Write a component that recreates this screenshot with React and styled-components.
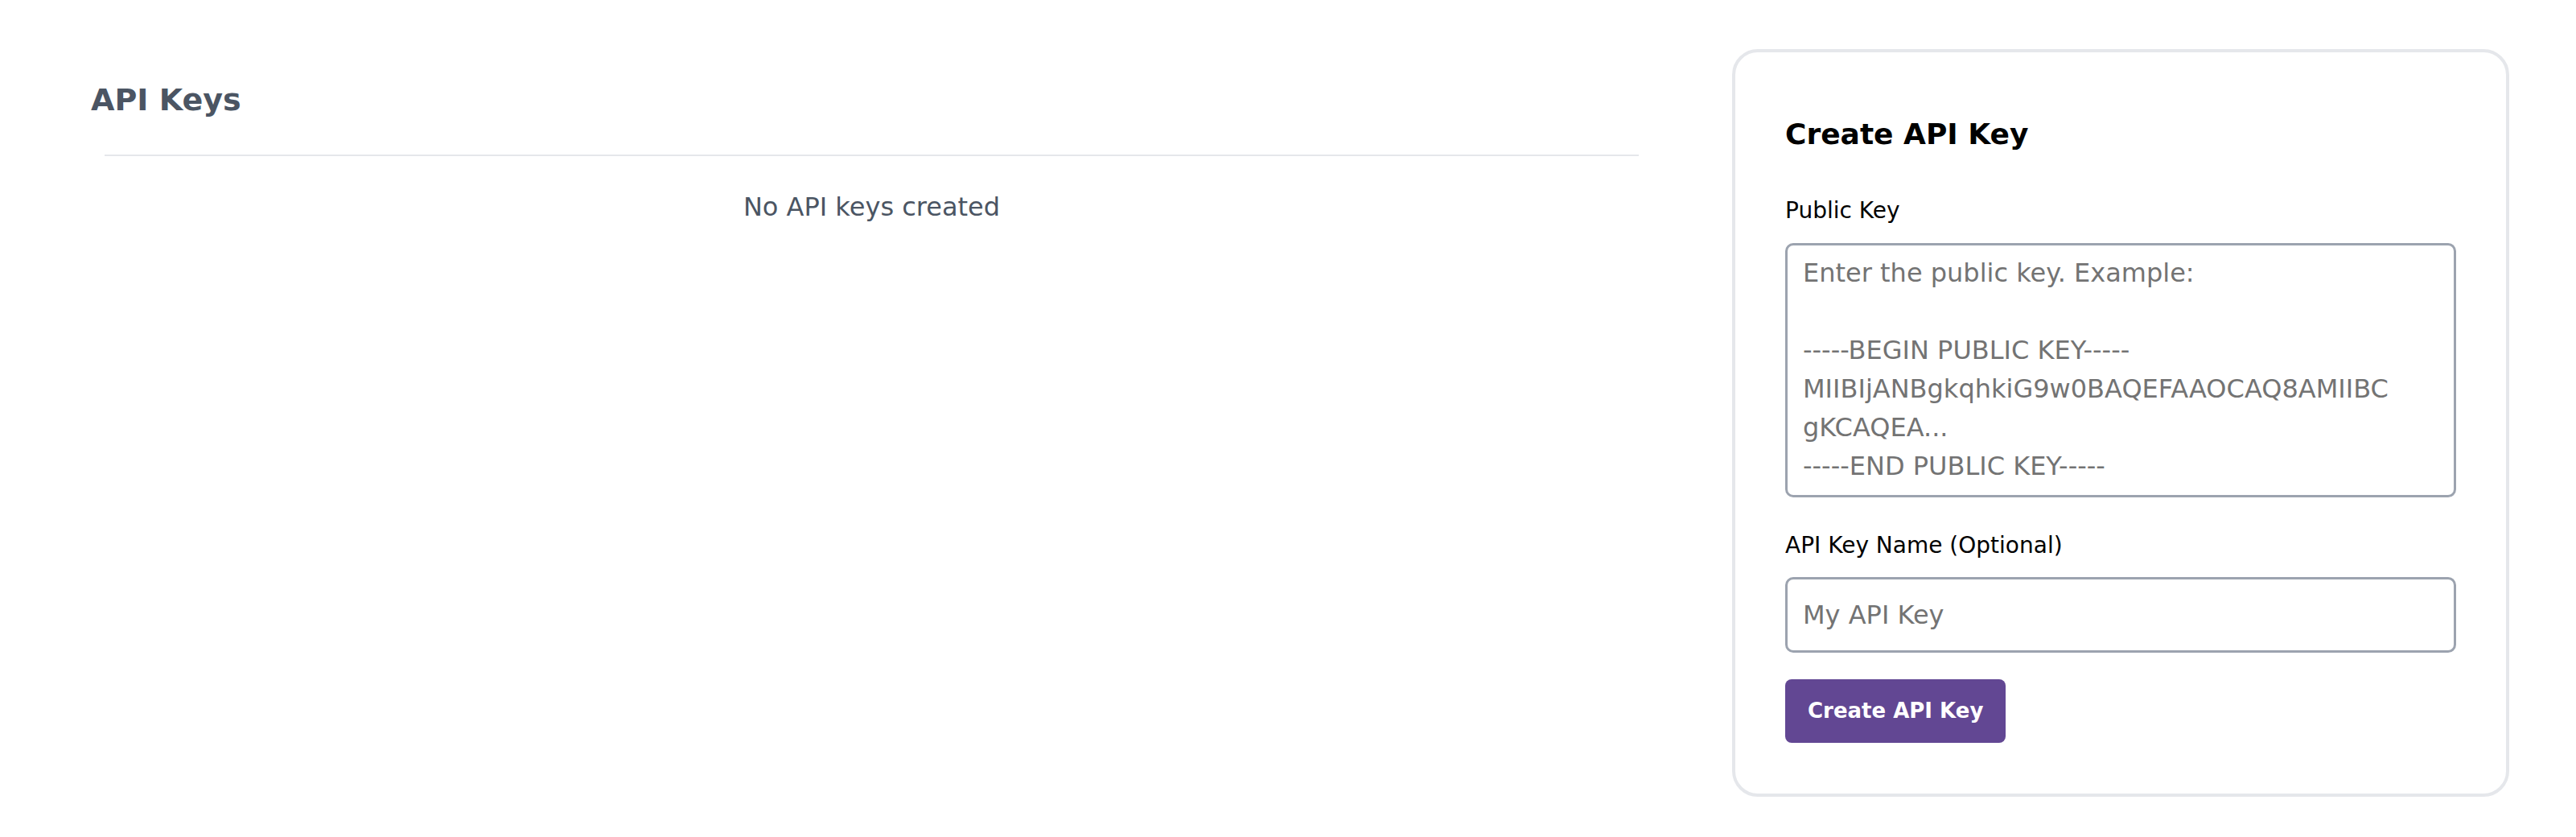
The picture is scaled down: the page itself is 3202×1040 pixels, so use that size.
import React from 'react';
import styled, { createGlobalStyle } from 'styled-components';

const GlobalStyle = createGlobalStyle`
    html, body {
        margin: 0;
        padding: 0;
        background: #ffffff;
    }
    body {
        font-family: "DejaVu Sans", "Liberation Sans", sans-serif;
        -webkit-font-smoothing: antialiased;
    }
    * {
        box-sizing: border-box;
    }
`;

const Page = styled.div`
    display: flex;
    align-items: flex-start;
    gap: 99px;
    padding: 61px 83px 0 113px;
    min-height: 1040px;
`;

const KeysColumn = styled.section`
    flex: 1;
    min-width: 0;
    padding-top: 35px;
`;

const PageTitle = styled.h2`
    margin: 0;
    font-size: 38px;
    line-height: 56px;
    font-weight: 700;
    color: #4b5563;
`;

const KeysList = styled.div`
    margin-top: 40px;
    padding: 0 17px;
`;

const Divider = styled.hr`
    margin: 0;
    border: none;
    height: 2px;
    background: #e5e7eb;
`;

const EmptyText = styled.p`
    margin: 39px 0 0;
    text-align: center;
    font-size: 32px;
    line-height: 48px;
    color: #4b5563;
`;

const Card = styled.form`
    flex-shrink: 0;
    width: 966px;
    padding: 78px 62px 63px;
    border: 4px solid #e5e7eb;
    border-radius: 32px;
    background: #ffffff;
`;

const CardTitle = styled.h3`
    margin: 0;
    font-size: 36px;
    line-height: 48px;
    font-weight: 700;
    color: #000000;
`;

const Field = styled.div`
    display: flex;
    flex-direction: column;
    margin-top: ${(p) => p.$gap}px;
`;

const Label = styled.label`
    font-size: 28px;
    line-height: 40px;
    color: #000000;
    margin-bottom: ${(p) => p.$gap || 20}px;
`;

const inputBase = `
    width: 100%;
    border: 3px solid #9ca3af;
    border-radius: 10px;
    font-family: "DejaVu Sans", "Liberation Sans", sans-serif;
    font-size: 32px;
    line-height: 48px;
    color: #111827;
    background: #ffffff;
    outline: none;
    &::placeholder {
        color: #737373;
        opacity: 1;
    }
`;

const KeyArea = styled.textarea`
    ${inputBase}
    height: 316px;
    padding: 10px 19px;
    resize: none;
    overflow: hidden;
`;

const NameInput = styled.input`
    ${inputBase}
    height: 94px;
    padding: 0 19px;
`;

const SubmitButton = styled.button`
    margin-top: 33px;
    padding: 20px 28px;
    border: none;
    border-radius: 8px;
    background: #624793;
    color: #ffffff;
    font-family: "DejaVu Sans", "Liberation Sans", sans-serif;
    font-size: 26px;
    line-height: 39px;
    font-weight: 700;
    cursor: pointer;
`;

const placeholderKey =
    'Enter the public key. Example:\n\n-----BEGIN PUBLIC KEY-----\nMIIBIjANBgkqhkiG9w0BAQEFAAOCAQ8AMIIBC\ngKCAQEA...\n-----END PUBLIC KEY-----';

const App = () => {
    return (
        <>
            <GlobalStyle />
            <Page>
                <KeysColumn>
                    <PageTitle>API Keys</PageTitle>
                    <KeysList>
                        <Divider />
                        <EmptyText>No API keys created</EmptyText>
                    </KeysList>
                </KeysColumn>
                <Card onSubmit={(e) => e.preventDefault()}>
                    <CardTitle>Create API Key</CardTitle>
                    <Field $gap={51}>
                        <Label htmlFor="public-key">Public Key</Label>
                        <KeyArea id="public-key" placeholder={placeholderKey} />
                    </Field>
                    <Field $gap={40}>
                        <Label htmlFor="key-name" $gap={19}>API Key Name (Optional)</Label>
                        <NameInput id="key-name" type="text" placeholder="My API Key" />
                    </Field>
                    <SubmitButton type="submit">Create API Key</SubmitButton>
                </Card>
            </Page>
        </>
    );
};

export default App;
